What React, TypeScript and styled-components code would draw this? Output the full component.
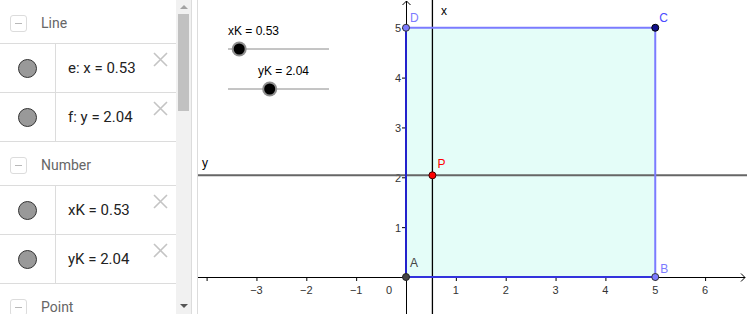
import * as React from 'react';
import styled, { createGlobalStyle } from 'styled-components';

const GlobalStyle = createGlobalStyle`
  html, body {
    margin: 0;
    padding: 0;
    background: #fff;
  }
  body {
    font-family: Roboto, "Liberation Sans", sans-serif;
  }
`;

const AppWrapper = styled.div`
  display: flex;
  width: 747px;
  height: 314px;
  overflow: hidden;
  background: #fff;
`;

const AlgebraPanel = styled.div`
  width: 176px;
  display: flex;
  flex-direction: column;
  overflow: hidden;
`;

const GroupHeader = styled.div`
  display: flex;
  align-items: center;
  height: 44px;
  flex-shrink: 0;
  border-bottom: 1px solid #dcdcdc;
  padding: 3px 0 0 10px;
  box-sizing: border-box;
`;

const ToggleBox = styled.div`
  width: 15px;
  height: 15px;
  border: 1px solid #dcdcdc;
  border-radius: 3px;
  display: flex;
  align-items: center;
  justify-content: center;
  margin-right: 14px;

  &::after {
    content: '';
    width: 7px;
    height: 1px;
    background: #b8b8b8;
  }
`;

const GroupTitle = styled.span`
  font-size: 14px;
  color: #666;
`;

const ItemRow = styled.div`
  display: flex;
  height: 49px;
  flex-shrink: 0;
  border-bottom: 1px solid #dcdcdc;
  box-sizing: border-box;
  position: relative;
`;

const MarbleCell = styled.div`
  width: 56px;
  border-right: 1px solid #dcdcdc;
  display: flex;
  align-items: center;
  justify-content: center;
  box-sizing: border-box;
`;

const Marble = styled.div`
  width: 19px;
  height: 19px;
  border-radius: 50%;
  background: #999;
  border: 1px solid #333;
  box-sizing: border-box;
`;

const Formula = styled.div`
  flex: 1;
  display: flex;
  align-items: center;
  padding-left: 12px;
  font-size: 15px;
  color: #222;
  white-space: pre;
`;

const CloseButton = styled.svg`
  position: absolute;
  top: 8px;
  right: 8px;
`;

const Scrollbar = styled.div`
  width: 15px;
  background: #f1f1f1;
  display: flex;
  flex-direction: column;
  align-items: center;
`;

const ScrollArrow = styled.div<{ $down?: boolean }>`
  width: 0;
  height: 0;
  border-left: 4px solid transparent;
  border-right: 4px solid transparent;
  ${({ $down }) => ($down ? 'border-top: 4px solid #555;' : 'border-bottom: 4px solid #a3a3a3;')}
  margin: ${({ $down }) => ($down ? 'auto 0 6px' : '5px 0 5px')};
`;

const ScrollThumb = styled.div`
  width: 11px;
  height: 97px;
  background: #c1c1c1;
`;

const Splitter = styled.div`
  width: 7px;
  border-left: 1px solid #dcdcdc;
  border-right: 1px solid #dcdcdc;
  box-sizing: border-box;
  background: #fff;
`;

const GraphicsView = styled.div`
  flex: 1;
  position: relative;
  font-family: "Liberation Sans", Arial, sans-serif;
`;

interface Item {
  text: string;
}

interface Group {
  title: string;
  items: Item[];
}

const groups: Group[] = [
  { title: 'Line', items: [{ text: 'e: x = 0.53' }, { text: 'f: y = 2.04' }] },
  { title: 'Number', items: [{ text: 'xK = 0.53' }, { text: 'yK = 2.04' }] },
  { title: 'Point', items: [] },
];

const CloseIcon = () => (
  <CloseButton width="15" height="15" viewBox="0 0 15 15">
    <path d="M1 1L14 14M14 1L1 14" stroke="#c4c4c4" strokeWidth="1.6" />
  </CloseButton>
);

const AlgebraView = () => (
  <AlgebraPanel>
    {groups.map((g) => (
      <React.Fragment key={g.title}>
        <GroupHeader>
          <ToggleBox />
          <GroupTitle>{g.title}</GroupTitle>
        </GroupHeader>
        {g.items.map((it) => (
          <ItemRow key={it.text}>
            <MarbleCell>
              <Marble />
            </MarbleCell>
            <Formula>{it.text}</Formula>
            <CloseIcon />
          </ItemRow>
        ))}
      </React.Fragment>
    ))}
  </AlgebraPanel>
);

// graphics coordinate system (relative to graphics view)
const OX = 208;
const OY = 277;
const S = 49.85;
const W = 549;
const H = 314;
const px = (x: number) => OX + x * S;
const py = (y: number) => OY - y * S;

const xK = 0.53;
const yK = 2.04;

const Slider = ({ label, value, labelX, y }: { label: string; value: number; labelX: number; y: number }) => {
  const x0 = 30;
  const knob = x0 + (value / 5) * 101 + 0.5;
  return (
    <g>
      <text x={labelX} y={y - 14} fontSize="12" fill="#000">{label}</text>
      <line x1={x0} y1={y} x2={x0 + 101} y2={y} stroke="#8a8a8a" strokeWidth="1" />
      <circle cx={knob} cy={y} r="7.5" fill="#8f8f8f" />
      <circle cx={knob} cy={y} r="5.5" fill="#000" />
    </g>
  );
};

const Point = ({ x, y, fill, stroke = '#222' }: { x: number; y: number; fill: string; stroke?: string }) => (
  <circle cx={px(x)} cy={py(y)} r="3.5" fill={fill} stroke={stroke} strokeWidth="1" />
);

const Graph = () => {
  const xTicks = [-4, -3, -2, -1, 1, 2, 3, 4, 5, 6];
  const yTicks = [1, 2, 3, 4, 5];
  return (
    <svg width={W} height={H} viewBox={`0 0 ${W} ${H}`} style={{ display: 'block' }}>
      {/* polygon fill */}
      <rect x={px(0)} y={py(5)} width={5 * S} height={5 * S} fill="#e4fdf8" />

      {/* axes */}
      <line x1={0} y1={OY + 0.5} x2={W - 2} y2={OY + 0.5} stroke="#000" strokeWidth="1" />
      <path d={`M${W - 6} ${OY - 3.5} L${W - 2} ${OY + 0.5} L${W - 6} ${OY + 4.5}`} fill="none" stroke="#000" />
      <line x1={OX + 0.5} y1={1} x2={OX + 0.5} y2={H} stroke="#000" strokeWidth="1" />
      <path d={`M${OX - 3.5} ${5} L${OX + 0.5} ${1} L${OX + 4.5} ${5}`} fill="none" stroke="#000" />

      {xTicks.map((t) => (
        <g key={`x${t}`}>
          <line x1={px(t) + 0.5} y1={OY} x2={px(t) + 0.5} y2={OY + 4} stroke="#000" />
          {t > -4 && (
            <text x={px(t)} y={OY + 17} fontSize="11" fill="#333" textAnchor="middle">
              {t < 0 ? `\u2212${-t}` : t}
            </text>
          )}
        </g>
      ))}
      <text x={OX - 20} y={OY + 17} fontSize="11" fill="#333">0</text>
      {yTicks.map((t) => (
        <g key={`y${t}`}>
          <line x1={OX - 4} y1={py(t) + 0.5} x2={OX} y2={py(t) + 0.5} stroke="#000" />
          <text x={OX - 5} y={py(t) + 4.5} fontSize="11" fill="#333" textAnchor="end">{t}</text>
        </g>
      ))}

      {/* lines e and f */}
      <line x1={0} y1={py(yK)} x2={W} y2={py(yK)} stroke="#666" strokeWidth="2" />
      <line x1={px(xK)} y1={0} x2={px(xK)} y2={H} stroke="#000" strokeWidth="1.3" />
      <text x={243} y={15} fontSize="12" fill="#000">x</text>
      <text x={4} y={167} fontSize="12" fill="#000">y</text>

      {/* polygon edges */}
      <line x1={px(0)} y1={py(5)} x2={px(5)} y2={py(5)} stroke="#7b7bff" strokeWidth="2" />
      <line x1={px(5)} y1={py(5)} x2={px(5)} y2={py(0)} stroke="#7b7bff" strokeWidth="2" />
      <line x1={px(0)} y1={py(0)} x2={px(5)} y2={py(0)} stroke="#3333dd" strokeWidth="2" />
      <line x1={px(0)} y1={py(0)} x2={px(0)} y2={py(5)} stroke="#2222cc" strokeWidth="2" />

      {/* points */}
      <Point x={0} y={0} fill="#444" />
      <Point x={5} y={0} fill="#7b7bff" stroke="#333" />
      <Point x={5} y={5} fill="#10108a" stroke="#000" />
      <Point x={0} y={5} fill="#7b7bff" stroke="#333" />
      <Point x={xK} y={yK} fill="#ff0000" stroke="#400" />

      <text x={px(0) + 4} y={py(0) - 10} fontSize="12" fill="#444">A</text>
      <text x={px(5) + 5} y={py(0) - 4} fontSize="12" fill="#7b7bff">B</text>
      <text x={px(5) + 4} y={py(5) - 6} fontSize="12" fill="#4a4aff">C</text>
      <text x={px(0) + 4} y={py(5) - 6} fontSize="12" fill="#7b7bff">D</text>
      <text x={px(xK) + 5} y={py(yK) - 7} fontSize="12" fill="#ff0000">P</text>

      <Slider label="xK = 0.53" value={xK} labelX={30} y={49} />
      <Slider label="yK = 2.04" value={yK} labelX={60} y={89} />
    </svg>
  );
};

const App = () => (
  <>
    <GlobalStyle />
    <AppWrapper>
      <AlgebraView />
      <Scrollbar>
        <ScrollArrow />
        <ScrollThumb />
        <ScrollArrow $down />
      </Scrollbar>
      <Splitter />
      <GraphicsView>
        <Graph />
      </GraphicsView>
    </AppWrapper>
  </>
);

export default App;
